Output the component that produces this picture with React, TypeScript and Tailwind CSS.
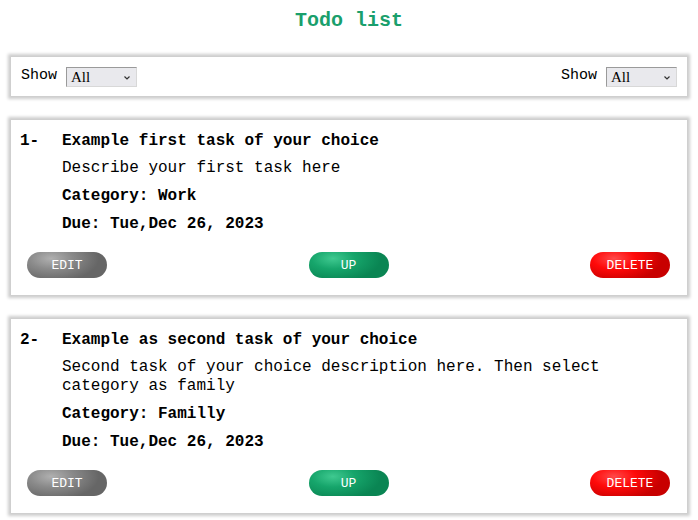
import React from "react";

const mono = { fontFamily: '"Liberation Mono", "Courier New", monospace' };

function FakeSelect() {
  return (
    <div className="flex items-center justify-between w-[71px] h-[20px] bg-[#e9e9ed] border border-[#9a9a9a] border-r-[#d8d8d8] border-b-[#d8d8d8] pl-[4px] pr-[5px]">
      <span className="text-[15px] leading-[18px] text-black" style={{ fontFamily: '"Liberation Serif", "Times New Roman", serif' }}>All</span>
      <svg width="8" height="6" viewBox="0 0 8 6" className="mt-[2px]">
        <path d="M1.5 1.5 L4 4 L6.5 1.5" fill="none" stroke="#333" strokeWidth="1.2" />
      </svg>
    </div>
  );
}

function Panel({ children, className = "" }: { children: React.ReactNode; className?: string }) {
  return (
    <div className={"bg-white shadow-[0_0_3px_3px_rgba(0,0,0,0.2)] " + className}>{children}</div>
  );
}

function Btn({ label, kind }: { label: string; kind: "edit" | "up" | "delete" }) {
  const bg =
    kind === "edit"
      ? "bg-[radial-gradient(ellipse_60%_90%_at_30%_25%,#b0b0b0_0%,#8a8a8a_45%,#666666_100%)]"
      : kind === "up"
      ? "bg-[radial-gradient(ellipse_60%_90%_at_30%_25%,#3fc990_0%,#16a56b_45%,#0a8553_100%)]"
      : "bg-[radial-gradient(ellipse_60%_90%_at_30%_25%,#ff4a4a_0%,#ff0a0a_45%,#c80000_100%)]";
  return (
    <div className={"w-[80px] h-[26px] rounded-[13px] flex items-center justify-center text-white text-[13px] leading-none " + bg} style={mono}>
      {label}
    </div>
  );
}

function Task({ n, title, desc, cat }: { n: number; title: string; desc: string; cat: string }) {
  return (
    <Panel className="mt-[24px] pt-[12px] pb-[17px] pl-[9px] pr-[9px]">
      <div className="flex">
        <div className="w-[42px] shrink-0 text-[16px] leading-[19px] font-bold text-black" style={mono}>{n}-</div>
        <div className="flex-1 text-black" style={mono}>
          <div className="text-[16px] leading-[19px] font-bold">{title}</div>
          <div className="mt-[8px] text-[16px] leading-[19px]">{desc}</div>
          <div className="mt-[9px] text-[16px] leading-[19px] font-bold">Category: {cat}</div>
          <div className="mt-[9px] text-[16px] leading-[19px] font-bold">Due: Tue,Dec 26, 2023</div>
        </div>
      </div>
      <div className="mt-[18px] flex justify-between pl-[7px] pr-[8px]">
        <Btn label="EDIT" kind="edit" />
        <Btn label="UP" kind="up" />
        <Btn label="DELETE" kind="delete" />
      </div>
    </Panel>
  );
}

export default function App() {
  return (
    <div className="w-[698px] h-[520px] bg-white px-[11px] overflow-hidden">
      <h1 className="pt-[10px] text-center text-[20px] leading-[22px] font-bold text-[#1a9f6c]" style={mono}>Todo list</h1>
      <Panel className="mt-[25px] h-[39px] flex items-center justify-between pl-[10px] pr-[10px]">
        <div className="flex items-center gap-[9px]">
          <span className="text-[15px] text-black" style={mono}>Show</span>
          <FakeSelect />
        </div>
        <div className="flex items-center gap-[9px]">
          <span className="text-[15px] text-black" style={mono}>Show</span>
          <FakeSelect />
        </div>
      </Panel>
      <Task n={1} title="Example first task of your choice" desc="Describe your first task here" cat="Work" />
      <Task
        n={2}
        title="Example as second task of your choice"
        desc="Second task of your choice description here. Then select category as family"
        cat="Familly"
      />
    </div>
  );
}
